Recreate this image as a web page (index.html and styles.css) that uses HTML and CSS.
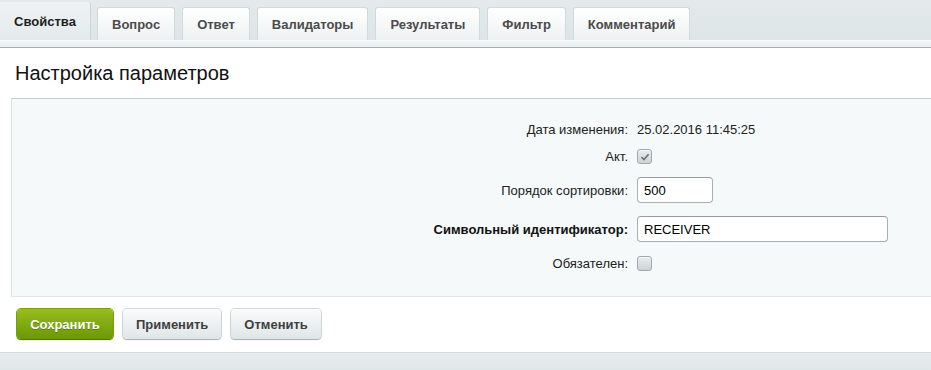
FILE: index.html
```html
<!DOCTYPE html>
<html lang="ru">
  <head>
    <meta charset="utf-8" />
    <meta name="viewport" content="width=device-width, initial-scale=1" />
    <title>Настройка параметров</title>
    <link rel="stylesheet" href="styles.css">
  </head>
  <body>
    <div class="tabs">
      <span class="tab active">Свойства</span>
      <span class="tab">Вопрос</span>
      <span class="tab">Ответ</span>
      <span class="tab">Валидаторы</span>
      <span class="tab">Результаты</span>
      <span class="tab">Фильтр</span>
      <span class="tab">Комментарий</span>
    </div>
    <div class="tabs-bottom"></div>

    <div class="content">
      <h1 class="title">Настройка параметров</h1>

      <div class="panel">
        <div class="row row-first">
          <div class="label">Дата изменения:</div>
          <div class="value">25.02.2016 11:45:25</div>
        </div>
        <div class="row">
          <div class="label">Акт.</div>
          <div class="value">
            <span class="checkbox">
              <svg width="12" height="12" viewBox="0 0 12 12">
                <path d="M2.5 6.2 L5 8.6 L9.6 3.2" fill="none" stroke="#6b7377" stroke-width="1.6" />
              </svg>
            </span>
          </div>
        </div>
        <div class="row">
          <div class="label">Порядок сортировки:</div>
          <div class="value"><input class="field field-short" type="text" value="500" /></div>
        </div>
        <div class="row">
          <div class="label bold">Символьный идентификатор:</div>
          <div class="value"><input class="field field-long" type="text" value="RECEIVER" /></div>
        </div>
        <div class="row row-last">
          <div class="label">Обязателен:</div>
          <div class="value"><span class="checkbox"></span></div>
        </div>
      </div>

      <div class="buttons">
        <button class="btn btn-save">Сохранить</button>
        <button class="btn">Применить</button>
        <button class="btn">Отменить</button>
      </div>
    </div>

    <div class="footer"></div>
  </body>
</html>
```

FILE: styles.css
```css
body {
  margin: 0;
  font-family: "Liberation Sans", Arial, sans-serif;
  font-size: 13px;
  color: #000;
  background-color: #fff;
}

.tabs {
  display: flex;
  align-items: flex-end;
  gap: 7px;
  height: 40px;
  background: linear-gradient(#e4eaec, #dde5e7);
}

.tab {
  display: flex;
  align-items: center;
  justify-content: center;
  box-sizing: border-box;
  height: 33px;
  padding: 0 14px;
  font-weight: bold;
  color: #4b4b4b;
  background: linear-gradient(#ffffff, #eef1f2);
  border: 1px solid #d2d9db;
  border-bottom: none;
  border-radius: 3px 3px 0 0;
}

.tab.active {
  height: 38px;
  width: 91px;
  color: #1e1e1e;
  background: linear-gradient(#eef2f3, #e4eaec);
  border: none;
  border-right: 1px solid #cdd4d6;
  border-radius: 0 3px 0 0;
  margin-right: -1px;
}

.tabs-bottom {
  height: 6px;
  background: linear-gradient(#f3f6f7, #e9eef0);
  border-top: 1px solid #f7f9fa;
  border-bottom: 1px solid #a4adb1;
}

.content {
  padding: 0 0 13px 11px;
}

.title {
  margin: 0;
  padding: 14px 0 0 4px;
  height: 36px;
  font-size: 20px;
  font-weight: normal;
  color: #111;
}

.panel {
  display: flex;
  flex-direction: column;
  gap: 13px;
  padding: 23px 0 25px 0;
  background-color: #f5f9f9;
  border-top: 1px solid #c5ccd0;
  border-left: 1px solid #dde3e5;
  border-bottom: 1px solid #e0e5e7;
}

.row {
  display: grid;
  grid-template-columns: 620px 1fr;
  align-items: center;
}

.row-first {
  margin-bottom: -1px;
}

.row-last {
  margin-top: 1px;
}

.label {
  text-align: right;
  padding-right: 4px;
  color: #222;
}

.label.bold {
  font-weight: bold;
  color: #111;
}

.value {
  padding-left: 5px;
  color: #222;
  display: flex;
  align-items: center;
}

.checkbox {
  display: flex;
  align-items: center;
  justify-content: center;
  box-sizing: border-box;
  width: 15px;
  height: 15px;
  border: 1px solid #a0a8ac;
  border-radius: 3px;
  background: linear-gradient(#e8ecee, #cdd3d6);
  box-shadow: inset 0 1px 0 #f6f8f9;
}

.field {
  box-sizing: border-box;
  height: 26px;
  padding: 0 6px;
  font-family: "Liberation Sans", Arial, sans-serif;
  font-size: 13px;
  color: #000;
  background-color: #fff;
  border: 1px solid #a7afb3;
  border-top-color: #959da1;
  border-radius: 4px;
  outline: 0;
}

.field-short {
  width: 76px;
}

.field-long {
  width: 251px;
}

.buttons {
  display: flex;
  gap: 10px;
  padding: 12px 0 0 6px;
}

.btn {
  box-sizing: border-box;
  height: 30px;
  padding: 0 13px;
  font-family: "Liberation Sans", Arial, sans-serif;
  font-size: 13px;
  font-weight: bold;
  color: #3f3f3f;
  background: linear-gradient(#fbfcfc, #dfe5e7);
  border: none;
  border-radius: 4px;
  box-shadow: 0 1px 1px #a9b0b3, 0 0 0 1px #d2d8da;
}

.btn:hover {
  cursor: pointer;
}

.btn-save {
  width: 96px;
  color: #fff;
  background: linear-gradient(#97bd1e, #6c9806);
  box-shadow: 0 1px 1px #55720a, 0 0 0 1px #7aa010;
  text-shadow: 0 1px 0 #5a7d06;
}

.footer {
  height: 18px;
  background: linear-gradient(#e6ecee, #e0e7e9);
  border-top: 1px solid #d3dadc;
}
```
